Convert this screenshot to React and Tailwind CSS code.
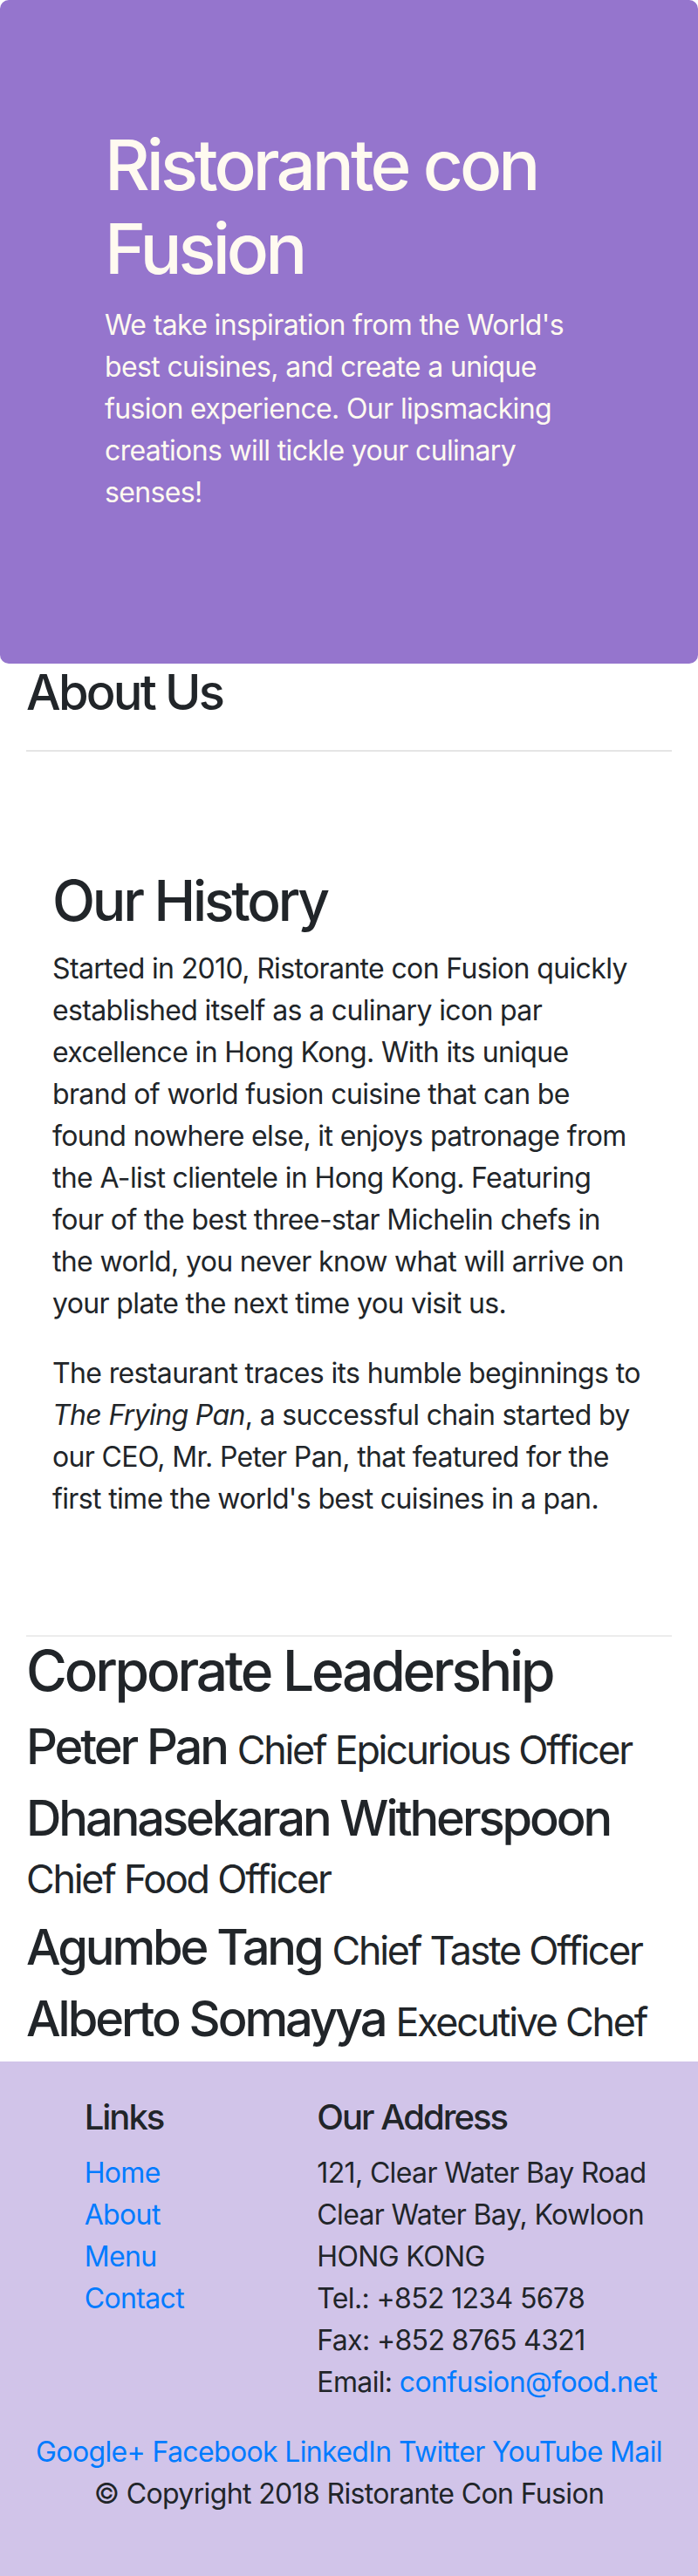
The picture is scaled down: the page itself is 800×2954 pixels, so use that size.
import React from 'react';

const leaders = [
    { name: 'Peter Pan', designation: 'Chief Epicurious Officer' },
    { name: 'Dhanasekaran Witherspoon', designation: 'Chief Food Officer' },
    { name: 'Agumbe Tang', designation: 'Chief Taste Officer' },
    { name: 'Alberto Somayya', designation: 'Executive Chef' },
];

const footerLinks = ['Home', 'About', 'Menu', 'Contact'];
const socials = ['Google+', 'Facebook', 'LinkedIn', 'Twitter', 'YouTube', 'Mail'];

function Jumbotron() {
    return (
        <header className="bg-[#9575cd] text-[#fffaf0] rounded-[10px] pt-[141px] pb-[140px] px-[120px]">
            <h1 className="text-[80px] leading-[96px] font-medium tracking-[-0.05em] mb-4">Ristorante con Fusion</h1>
            <p className="mb-8">
                We take inspiration from the World's best cuisines, and create a unique fusion experience.
                Our lipsmacking creations will tickle your culinary senses!
            </p>
        </header>
    );
}

function About() {
    return (
        <div className="px-[30px]">
            <h3 className="text-[56px] leading-[67px] font-medium tracking-[-0.05em]">About Us</h3>
            <hr className="mt-8 mb-8 border-t-2 border-black/10" />

            {/* History */}
            <div className="px-[30px] py-[100px] border-b-2 border-[#ececec]">
                <h2 className="text-[64px] leading-[77px] font-medium tracking-[-0.05em] mb-4">Our History</h2>
                <p className="mb-8">
                    Started in 2010, Ristorante con Fusion quickly established itself as a culinary icon par
                    excellence in Hong Kong. With its unique brand of world fusion cuisine that can be found
                    nowhere else, it enjoys patronage from the A-list clientele in Hong Kong. Featuring four
                    of the best three-star Michelin chefs in the world, you never know what will arrive on
                    your plate the next time you visit us.
                </p>
                <p className="mb-8">
                    The restaurant traces its humble beginnings to <em>The Frying Pan</em>, a successful chain
                    started by our CEO, Mr. Peter Pan, that featured for the first time the world's best
                    cuisines in a pan.
                </p>
            </div>

            {/* Leaders */}
            <h2 className="text-[64px] leading-[77px] font-medium tracking-[-0.05em] mb-4">Corporate Leadership</h2>
            {leaders.map((leader) => (
                <h3 key={leader.name} className="text-[56px] leading-[66px] font-medium tracking-[-0.055em] mb-4">
                    {leader.name}{' '}
                    <small className="text-[80%] leading-[1.2] font-normal tracking-[-0.05em]">{leader.designation}</small>
                </h3>
            ))}
        </div>
    );
}

function Footer() {
    return (
        <footer className="bg-[#d1c4e9] py-10">
            <div className="flex flex-wrap">
                <div className="ml-[66.67px] w-[266.67px] px-[30px]">
                    <h5 className="text-[40px] leading-[48px] font-medium tracking-[-0.05em] mb-4">Links</h5>
                    <ul>
                        {footerLinks.map((link) => (
                            <li key={link}>
                                <a href="#" className="text-[#007bff]">{link}</a>
                            </li>
                        ))}
                    </ul>
                </div>
                <div className="w-[466.67px] px-[30px]">
                    <h5 className="text-[40px] leading-[48px] font-medium tracking-[-0.05em] mb-4">Our Address</h5>
                    <address className="not-italic mb-8">
                        121, Clear Water Bay Road<br />
                        Clear Water Bay, Kowloon<br />
                        HONG KONG<br />
                        Tel.: +852 1234 5678<br />
                        Fax: +852 8765 4321<br />
                        Email: <a href="#" className="text-[#007bff]">confusion@food.net</a>
                    </address>
                </div>
                <div className="w-full px-[30px] self-center text-center">
                    {socials.map((s, i) => (
                        <React.Fragment key={s}>
                            {i > 0 && ' '}
                            <a href="#" className="text-[#007bff]">{s}</a>
                        </React.Fragment>
                    ))}
                </div>
            </div>
            <div className="flex justify-center">
                <p className="mb-8">© Copyright 2018 Ristorante Con Fusion</p>
            </div>
        </footer>
    );
}

export default function App() {
    return (
        <div className="font-['Inter','Noto_Sans',sans-serif] text-[32px] leading-[48px] tracking-[-0.02em] text-[#212529] bg-white">
            <Jumbotron />
            <About />
            <Footer />
        </div>
    );
}
